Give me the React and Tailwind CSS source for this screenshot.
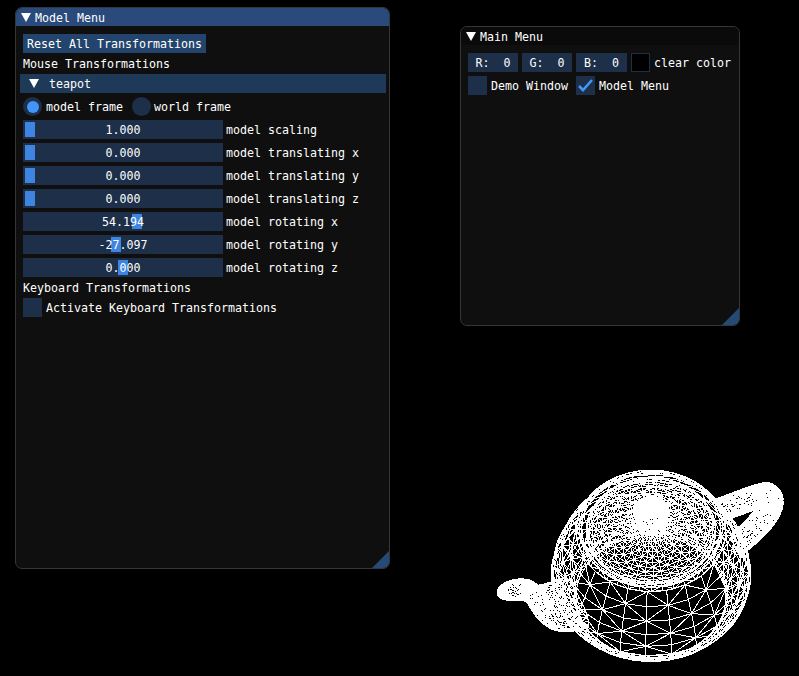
import React, { useMemo } from 'react';

// lathe profiles (r, z) of the rotationally symmetric parts, with their mesh density
const PROFILES = [
  { p: [[1.4, 2.4], [1.3375, 2.53125], [1.4375, 2.53125], [1.5, 2.4]], nu: 40, nv: 3 },
  { p: [[1.5, 2.4], [1.75, 1.875], [2, 1.35], [2, 0.9]], nu: 24, nv: 5 },
  { p: [[2, 0.9], [2, 0.45], [1.5, 0.225], [1.5, 0.15]], nu: 48, nv: 6 },
  { p: [[0, 3.15], [0.8, 3.15], [0, 2.85], [0.2, 2.7]], nu: 44, nv: 12 },
  { p: [[0.2, 2.7], [0.4, 2.55], [1.3, 2.55], [1.3, 2.4]], nu: 44, nv: 13 },
];

// half patches, mirrored over y
const PATCHES = [
  [[[-1.6, 0, 2.025], [-1.6, -0.36, 2.025], [-1.5, -0.36, 2.25], [-1.5, 0, 2.25]],
   [[-2.3, 0, 1.9], [-2.3, -0.36, 1.9], [-2.45, -0.36, 2.25], [-2.45, 0, 2.25]],
   [[-2.55, 0, 1.95], [-2.55, -0.36, 1.95], [-2.92, -0.36, 2.25], [-2.92, 0, 2.25]],
   [[-2.55, 0, 1.8], [-2.55, -0.36, 1.8], [-2.92, -0.36, 1.8], [-2.92, 0, 1.8]]],
  [[[-2.55, 0, 1.8], [-2.55, -0.36, 1.8], [-2.92, -0.36, 1.8], [-2.92, 0, 1.8]],
   [[-2.55, 0, 1.575], [-2.55, -0.36, 1.575], [-2.92, -0.36, 1.35], [-2.92, 0, 1.35]],
   [[-2.35, 0, 1.2], [-2.35, -0.36, 1.2], [-2.65, -0.36, 0.9375], [-2.65, 0, 0.9375]],
   [[-2, 0, 0.9], [-2, -0.36, 0.9], [-1.9, -0.36, 0.6], [-1.9, 0, 0.6]]],
  [[[1.7, 0, 1.425], [1.7, -0.8, 1.425], [1.7, -0.8, 0.6], [1.7, 0, 0.6]],
   [[2.6, 0, 1.425], [2.6, -0.8, 1.425], [3.1, -0.8, 0.825], [3.1, 0, 0.825]],
   [[2.3, 0, 2.0], [2.3, -0.34, 2.0], [2.4, -0.34, 1.925], [2.4, 0, 1.925]],
   [[2.7, 0, 2.28], [2.7, -0.33, 2.28], [3.3, -0.33, 2.28], [3.3, 0, 2.28]]],
  [[[2.7, 0, 2.28], [2.7, -0.33, 2.28], [3.3, -0.33, 2.28], [3.3, 0, 2.28]],
   [[2.8, 0, 2.355], [2.8, -0.33, 2.355], [3.525, -0.33, 2.37], [3.525, 0, 2.37]],
   [[2.9, 0, 2.355], [2.9, -0.24, 2.355], [3.45, -0.24, 2.39], [3.45, 0, 2.39]],
   [[2.8, 0, 2.28], [2.8, -0.24, 2.28], [3.2, -0.24, 2.28], [3.2, 0, 2.28]]],
];

const bern = (t) => [(1 - t) ** 3, 3 * t * (1 - t) ** 2, 3 * t * t * (1 - t), t ** 3];

const PHI = (27 * Math.PI) / 180;
const TILT = (54.2 * Math.PI) / 180;
const project = ([x, y, z]) => {
  const s = 50;
  const xr = x * Math.cos(PHI) - y * Math.sin(PHI);
  const d = x * Math.sin(PHI) + y * Math.cos(PHI);
  return [651 - s * xr, 601 + s * d * Math.sin(TILT) - s * z * Math.cos(TILT)];
};

const meshPath = (fn, nu, nv) => {
  const pts = [];
  for (let i = 0; i <= nu; i++) {
    const row = [];
    for (let j = 0; j <= nv; j++) row.push(project(fn(i / nu, j / nv)));
    pts.push(row);
  }
  const seg = (a, b) => `M${a[0].toFixed(1)} ${a[1].toFixed(1)}L${b[0].toFixed(1)} ${b[1].toFixed(1)}`;
  let d = '';
  for (let i = 0; i <= nu; i++) {
    for (let j = 0; j <= nv; j++) {
      if (i < nu) d += seg(pts[i][j], pts[i + 1][j]);
      if (j < nv) d += seg(pts[i][j], pts[i][j + 1]);
      if (i < nu && j < nv) {
        // alternate the diagonals so the quads read as diamonds
        d += (i + j) % 2 ? seg(pts[i][j + 1], pts[i + 1][j]) : seg(pts[i][j], pts[i + 1][j + 1]);
      }
    }
  }
  return d;
};

const buildTeapot = () => {
  let d = '';
  PROFILES.forEach(({ p, nu, nv }) => {
    d += meshPath((u, v) => {
      const b = bern(v);
      const r = b.reduce((a, w, k) => a + w * p[k][0], 0);
      const z = b.reduce((a, w, k) => a + w * p[k][1], 0);
      const ang = u * Math.PI * 2;
      return [r * Math.cos(ang), r * Math.sin(ang), z];
    }, nu, nv);
  });
  PATCHES.forEach((p) => {
    [1, -1].forEach((sign) => {
      d += meshPath((u, v) => {
        const bu = bern(u);
        const bv = bern(v);
        const out = [0, 0, 0];
        for (let i = 0; i < 4; i++) {
          for (let j = 0; j < 4; j++) {
            for (let k = 0; k < 3; k++) out[k] += bu[i] * bv[j] * p[i][j][k];
          }
        }
        return [out[0], out[1] * sign, out[2]];
      }, 16, 12);
    });
  });
  return d;
};

const Teapot = () => {
  const d = useMemo(buildTeapot, []);
  return (
    <svg className="absolute left-0 top-0" width="799" height="676" viewBox="0 0 799 676">
      <path d={d} fill="none" stroke="#fff" strokeWidth="1" shapeRendering="crispEdges" />
    </svg>
  );
};

const Arrow = () => (
  <svg width="10" height="9" viewBox="0 0 10 9" className="shrink-0">
    <polygon points="0,0 10,0 5,9" fill="#fff" />
  </svg>
);

const Grip = () => (
  <div className="absolute bottom-0 right-0 w-[17px] h-[17px] bg-[#264a76] [clip-path:polygon(100%_0,100%_100%,0_100%)]" />
);

const Checkbox = ({ checked }) => (
  <div className="w-[19px] h-[19px] shrink-0 bg-[#1d2f49] flex items-center justify-center">
    {checked && (
      <svg width="15" height="13" viewBox="0 0 15 13">
        <polyline points="1,7 5,11 14,1" fill="none" stroke="#4296fa" strokeWidth="2.6" />
      </svg>
    )}
  </div>
);

const Text = ({ children, className = '' }) => (
  <span className={`h-[13px] pt-px leading-[13px] whitespace-pre ${className}`}>{children}</span>
);

const SLIDERS = [
  { value: '1.000', label: 'model scaling', grab: 2 },
  { value: '0.000', label: 'model translating x', grab: 2 },
  { value: '0.000', label: 'model translating y', grab: 2 },
  { value: '0.000', label: 'model translating z', grab: 2 },
  { value: '54.194', label: 'model rotating x', grab: 109 },
  { value: '-27.097', label: 'model rotating y', grab: 88 },
  { value: '0.000', label: 'model rotating z', grab: 95 },
];

const Slider = ({ value, label, grab }) => (
  <div className="flex items-center gap-[3px] h-[19px]">
    <div className="relative w-[200px] h-[19px] bg-[#1d2f49] flex items-center justify-center">
      <div className="absolute top-[2px] w-[10px] h-[15px] bg-[#3d85e0]" style={{ left: grab }} />
      <Text className="relative">{value}</Text>
    </div>
    <Text>{label}</Text>
  </div>
);

const Field = ({ children, className }) => (
  <div className={`h-[19px] bg-[#1d2f49] flex items-center justify-center ${className}`}>
    <Text>{children}</Text>
  </div>
);

const ModelMenu = () => (
  <div className="absolute left-[15px] top-[7px] w-[375px] h-[562px] bg-[#0f0f0f] border border-[#35353d] rounded-[7px] overflow-hidden flex flex-col">
    <div className="h-[18px] shrink-0 bg-[#294a7a] flex items-center gap-[4px] pl-[5px]">
      <Arrow />
      <Text>Model Menu</Text>
    </div>
    <div className="flex flex-col gap-1 pl-[7px] pt-2">
      <button className="w-[183px] h-[19px] bg-[#23456d] flex items-center justify-center">
        <Text>Reset All Transformations</Text>
      </button>
      <Text>Mouse Transformations</Text>
      <div className="w-[366px] h-[19px] -ml-[3px] bg-[#1f3958] flex items-center gap-[10px] pl-[9px]">
        <Arrow />
        <Text>teapot</Text>
      </div>
      <div className="flex items-center h-[19px]">
        <div className="w-[19px] h-[19px] rounded-full bg-[#1d2f49] flex items-center justify-center">
          <div className="w-[12px] h-[12px] rounded-full bg-[#4296fa]" />
        </div>
        <Text className="ml-[4px]">model frame</Text>
        <div className="w-[19px] h-[19px] rounded-full bg-[#1d2f49] ml-[9px]" />
        <Text className="ml-[3px]">world frame</Text>
      </div>
      {SLIDERS.map((s) => (
        <Slider key={s.label} {...s} />
      ))}
      <Text>Keyboard Transformations</Text>
      <div className="flex items-center gap-1">
        <Checkbox />
        <Text>Activate Keyboard Transformations</Text>
      </div>
    </div>
    <Grip />
  </div>
);

const MainMenu = () => (
  <div className="absolute left-[460px] top-[26px] w-[280px] h-[300px] bg-[#0f0f0f] border border-[#35353d] rounded-[7px] overflow-hidden flex flex-col">
    <div className="h-[18px] shrink-0 bg-[#0a0a0a] flex items-center gap-[4px] pl-[5px]">
      <Arrow />
      <Text>Main Menu</Text>
    </div>
    <div className="flex flex-col gap-1 pl-[7px] pt-2">
      <div className="flex items-center gap-1">
        <Field className="w-[50px]">R:  0</Field>
        <Field className="w-[50px]">G:  0</Field>
        <Field className="w-[51px]">B:  0</Field>
        <div className="w-[19px] h-[19px] bg-black border border-[#1d2f49]" />
        <Text>clear color</Text>
      </div>
      <div className="flex items-center">
        <Checkbox />
        <Text className="ml-1">Demo Window</Text>
        <div className="ml-[8px]">
          <Checkbox checked />
        </div>
        <Text className="ml-1">Model Menu</Text>
      </div>
    </div>
    <Grip />
  </div>
);

const App = () => (
  <div className="relative w-[799px] h-[676px] overflow-hidden bg-black text-white text-[11.63px] font-['DejaVu_Sans_Mono',monospace]">
    <Teapot />
    <ModelMenu />
    <MainMenu />
  </div>
);

export default App;
